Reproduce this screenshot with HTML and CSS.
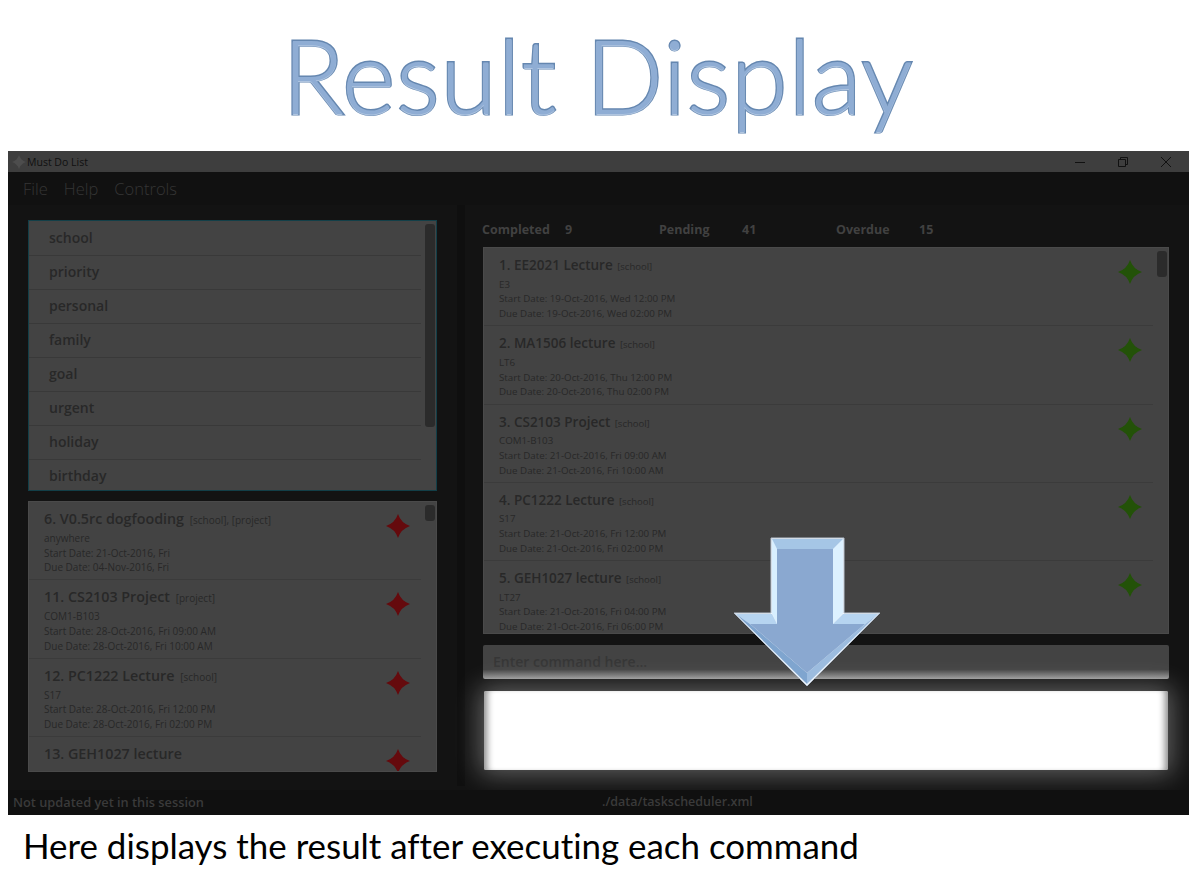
FILE: index.html
```html
<!DOCTYPE html>
<html lang="en">
<head>
    <meta charset="UTF-8">
    <meta name="viewport" content="width=device-width, initial-scale=1.0">
    <title>Result Display</title>
    <link rel="stylesheet" href="styles.css">
</head>
<body>
    <svg class="defs" width="0" height="0">
        <defs>
            <symbol id="star" viewBox="0 0 24 24">
                <path d="M12 0 Q15 9 24 12 Q15 15 12 24 Q9 15 0 12 Q9 9 12 0 Z"/>
            </symbol>
        </defs>
    </svg>

    <h1 class="headline">Result Display</h1>

    <div class="window">
        <div class="titlebar">
            <svg class="app-icon" width="14" height="14" viewBox="0 0 24 24"><use href="#star"/></svg>
            <span class="app-name">Must Do List</span>
            <div class="win-buttons">
                <svg width="12" height="12" viewBox="0 0 12 12"><path d="M1 6.5H11"/></svg>
                <svg width="12" height="12" viewBox="0 0 12 12"><path d="M1.5 3.5H8.5V10.5H1.5Z M3.5 3.5V1.5H10.5V8.5H8.5"/></svg>
                <svg width="12" height="12" viewBox="0 0 12 12"><path d="M1 1L11 11M11 1L1 11"/></svg>
            </div>
        </div>
        <div class="menubar">
            <span>File</span>
            <span>Help</span>
            <span>Controls</span>
        </div>

        <div class="panes">
            <div class="left-pane">
                <div class="box tag-box">
                    <div class="rows">
                        <div class="tag">school</div>
                        <div class="tag">priority</div>
                        <div class="tag">personal</div>
                        <div class="tag">family</div>
                        <div class="tag">goal</div>
                        <div class="tag">urgent</div>
                        <div class="tag">holiday</div>
                        <div class="tag">birthday</div>
                    </div>
                    <div class="track"><div class="thumb tag-thumb"></div></div>
                </div>
                <div class="box task-box">
                    <div class="rows">
                        <div class="task">
                            <div class="task-text">
                                <div class="task-name">6. V0.5rc dogfooding <small>[school], [project]</small></div>
                                <div>anywhere</div>
                                <div>Start Date: 21-Oct-2016, Fri</div>
                                <div>Due Date: 04-Nov-2016, Fri</div>
                            </div>
                            <svg class="star red"><use href="#star"/></svg>
                        </div>
                        <div class="task">
                            <div class="task-text">
                                <div class="task-name">11. CS2103 Project <small>[project]</small></div>
                                <div>COM1-B103</div>
                                <div>Start Date: 28-Oct-2016, Fri 09:00 AM</div>
                                <div>Due Date: 28-Oct-2016, Fri 10:00 AM</div>
                            </div>
                            <svg class="star red"><use href="#star"/></svg>
                        </div>
                        <div class="task">
                            <div class="task-text">
                                <div class="task-name">12. PC1222 Lecture <small>[school]</small></div>
                                <div>S17</div>
                                <div>Start Date: 28-Oct-2016, Fri 12:00 PM</div>
                                <div>Due Date: 28-Oct-2016, Fri 02:00 PM</div>
                            </div>
                            <svg class="star red"><use href="#star"/></svg>
                        </div>
                        <div class="task">
                            <div class="task-text">
                                <div class="task-name">13. GEH1027 lecture</div>
                            </div>
                            <svg class="star red"><use href="#star"/></svg>
                        </div>
                    </div>
                    <div class="track"><div class="thumb task-thumb"></div></div>
                </div>
            </div>

            <div class="splitter"></div>

            <div class="right-pane">
                <div class="summary">
                    <div class="stat"><b>Completed</b><b>9</b></div>
                    <div class="stat"><b>Pending</b><b>41</b></div>
                    <div class="stat"><b>Overdue</b><b>15</b></div>
                </div>
                <div class="box main-box">
                    <div class="rows">
                        <div class="task">
                            <div class="task-text">
                                <div class="task-name">1. EE2021 Lecture <small>[school]</small></div>
                                <div>E3</div>
                                <div>Start Date: 19-Oct-2016, Wed 12:00 PM</div>
                                <div>Due Date: 19-Oct-2016, Wed 02:00 PM</div>
                            </div>
                            <svg class="star green"><use href="#star"/></svg>
                        </div>
                        <div class="task">
                            <div class="task-text">
                                <div class="task-name">2. MA1506 lecture <small>[school]</small></div>
                                <div>LT6</div>
                                <div>Start Date: 20-Oct-2016, Thu 12:00 PM</div>
                                <div>Due Date: 20-Oct-2016, Thu 02:00 PM</div>
                            </div>
                            <svg class="star green"><use href="#star"/></svg>
                        </div>
                        <div class="task">
                            <div class="task-text">
                                <div class="task-name">3. CS2103 Project <small>[school]</small></div>
                                <div>COM1-B103</div>
                                <div>Start Date: 21-Oct-2016, Fri 09:00 AM</div>
                                <div>Due Date: 21-Oct-2016, Fri 10:00 AM</div>
                            </div>
                            <svg class="star green"><use href="#star"/></svg>
                        </div>
                        <div class="task">
                            <div class="task-text">
                                <div class="task-name">4. PC1222 Lecture <small>[school]</small></div>
                                <div>S17</div>
                                <div>Start Date: 21-Oct-2016, Fri 12:00 PM</div>
                                <div>Due Date: 21-Oct-2016, Fri 02:00 PM</div>
                            </div>
                            <svg class="star green"><use href="#star"/></svg>
                        </div>
                        <div class="task">
                            <div class="task-text">
                                <div class="task-name">5. GEH1027 lecture <small>[school]</small></div>
                                <div>LT27</div>
                                <div>Start Date: 21-Oct-2016, Fri 04:00 PM</div>
                                <div>Due Date: 21-Oct-2016, Fri 06:00 PM</div>
                            </div>
                            <svg class="star green"><use href="#star"/></svg>
                        </div>
                    </div>
                    <div class="track"><div class="thumb main-thumb"></div></div>
                </div>
                <div class="command">Enter command here...</div>
                <div class="result"></div>
            </div>
        </div>

        <div class="statusbar">
            <span class="status-left">Not updated yet in this session</span>
            <span class="status-path">./data/taskscheduler.xml</span>
        </div>
    </div>

    <p class="caption">Here displays the result after executing each command</p>

    <!-- callout arrow on top of the window -->
    <svg class="arrow" width="149" height="150" viewBox="0 0 149 150">
        <polygon points="38,1 111,1 111,76 147,76 74,149 1,76 38,76" fill="#f0f6fc" stroke="#b4c0ce"/>
        <polygon points="39,2 44,12 44,87 39,76" fill="#d8efff"/>
        <polygon points="110,2 100,12 100,87 110,76" fill="#dcf1ff"/>
        <polygon points="39,2 110,2 100,12 44,12" fill="#a5c6e6"/>
        <polygon points="3,77 39,77 44,87 17,87" fill="#b6d4f0"/>
        <polygon points="145,77 110,77 100,87 132,87" fill="#b6d4f0"/>
        <polygon points="3,77 17,87 74,136 74,147" fill="#7fa5cf"/>
        <polygon points="145,77 132,87 74,136 74,147" fill="#9cbcdf"/>
        <polygon points="44,12 100,12 100,87 132,87 74,136 17,87 44,87" fill="#8aa8d0"/>
    </svg>
</body>
</html>
```

FILE: styles.css
```css
html, body {
    margin: 0;
    height: 100%;
    overflow: hidden;
}
body {
    font-family: "Open Sans", sans-serif;
    background-color: #fff;
    position: relative;
}
.defs {
    position: absolute;
}
.headline {
    margin: 0;
    height: 151px;
    box-sizing: border-box;
    padding: 15px 0 0 7px;
    text-align: center;
    font-family: Lato, sans-serif;
    font-weight: 300;
    font-size: 102px;
    line-height: 120px;
    letter-spacing: 1px;
    color: #8fadd4;
    -webkit-text-stroke: 3px #6587b0;
    paint-order: stroke fill;
    text-shadow: 0 1px 1px #b9cde6;
}
.window {
    margin-left: 8px;
    width: 1181px;
    height: 664px;
    background-color: #111;
    display: flex;
    flex-direction: column;
    overflow: hidden;
}
.titlebar {
    height: 21px;
    flex: none;
    background-color: #3e3e3e;
    display: flex;
    align-items: center;
    padding-left: 2px;
    font-size: 10.5px;
    color: #101010;
}
.app-icon {
    fill: #4d4d4d;
    margin: 0 1px 0 2px;
}
.win-buttons {
    margin-left: auto;
    display: flex;
    gap: 31px;
    padding-right: 17px;
}
.win-buttons svg {
    fill: none;
    stroke: #111;
    stroke-width: 1;
}
.menubar {
    height: 33px;
    flex: none;
    display: flex;
    align-items: center;
    gap: 16px;
    padding-left: 15px;
    font-size: 16.5px;
    font-weight: 300;
    color: #353535;
}
.panes {
    flex: 1;
    display: flex;
    min-height: 0;
    background-color: #131313;
}
.left-pane {
    width: 449px;
    flex: none;
    box-sizing: border-box;
    padding: 15px 20px 0 20px;
    display: flex;
    flex-direction: column;
    gap: 10px;
}
.splitter {
    width: 8px;
    flex: none;
    height: 581px;
    background-color: #0f0f0f;
}
.right-pane {
    flex: 1;
    padding: 0 20px 0 18px;
    display: flex;
    flex-direction: column;
    min-width: 0;
}
.box {
    display: flex;
    background-color: #434343;
    overflow: hidden;
    flex: none;
    box-sizing: border-box;
}
.rows {
    flex: 1;
    min-width: 0;
}
.track {
    width: 15px;
    flex: none;
    padding: 3px 1px 0 4px;
    box-sizing: border-box;
}
.thumb {
    background-color: #2b2b2b;
    border-radius: 3px;
}
.tag-box {
    height: 271px;
    border: 1px solid #123f48;
}
.tag-box .rows {
    padding-top: 1px;
}
.tag-thumb {
    height: 203px;
}
.task-box {
    height: 271px;
    border: 1px solid #4a4a4a;
}
.task-thumb {
    height: 16px;
}
.main-box {
    height: 387px;
    border: 1px solid #4a4a4a;
}
.main-thumb {
    height: 26px;
}
.tag {
    height: 33px;
    border-bottom: 1px solid #393939;
    padding-left: 20px;
    font-size: 14px;
    font-weight: 600;
    line-height: 31px;
    color: #282828;
}
.task {
    height: 71.3px;
    border-bottom: 1px solid #3b3b3b;
    padding: 6px 11px 0 15px;
    display: flex;
    justify-content: space-between;
    font-size: 10px;
    line-height: 14.7px;
    color: #282828;
}
.task-name {
    font-size: 14.3px;
    font-weight: 600;
    line-height: 21px;
}
.task-name small {
    font-size: 10px;
    font-weight: 400;
    margin-left: 2px;
}
.main-box .task {
    font-size: 9.75px;
    padding-top: 7px;
    height: 70.3px;
}
.main-box .task-name {
    font-size: 13.5px;
    margin-bottom: 0.5px;
}
.main-box .task-name small {
    font-size: 9.5px;
    margin-left: 1px;
}
.main-box .star {
    margin-top: 5px;
}
.star {
    width: 24px;
    height: 24px;
    flex: none;
    margin-top: 6px;
}
.red {
    fill: #650a0d;
}
.green {
    fill: #235208;
}
.summary {
    height: 42px;
    flex: none;
    display: flex;
    align-items: center;
    margin-left: -1px;
    padding-top: 6px;
    box-sizing: border-box;
    font-size: 12.5px;
    color: #414141;
}
.stat {
    width: 177px;
    display: flex;
}
.stat b:first-child {
    width: 83px;
    font-weight: 700;
}
.command {
    flex: none;
    height: 34px;
    margin-top: 11px;
    box-sizing: border-box;
    padding: 0 10px;
    background: linear-gradient(#434343 72%, #989898 100%);
    border-radius: 2px;
    font-size: 14px;
    font-weight: 600;
    line-height: 33px;
    color: #363636;
}
.result {
    flex: none;
    height: 79px;
    margin: 12px 1px 0;
    background-color: #fff;
    border-radius: 2px;
    box-shadow: 0 0 26px 4px rgba(255, 255, 255, 0.34), inset 8px 0 7px -5px #888, inset -8px 0 7px -5px #888;
}
.statusbar {
    height: 25px;
    flex: none;
    display: flex;
    align-items: center;
    padding-bottom: 2px;
    box-sizing: border-box;
    background-color: #101010;
    font-size: 12.5px;
    font-weight: 600;
    color: #3a3a3a;
}
.status-left {
    width: 594px;
    padding-left: 5px;
    box-sizing: border-box;
    font-size: 12.8px;
}
.caption {
    margin: 10px 0 0 23px;
    font-family: Lato, sans-serif;
    font-size: 34.9px;
    line-height: 41px;
    font-variant-ligatures: none;
    color: #000;
}
.arrow {
    position: absolute;
    left: 733px;
    top: 537px;
}
```
